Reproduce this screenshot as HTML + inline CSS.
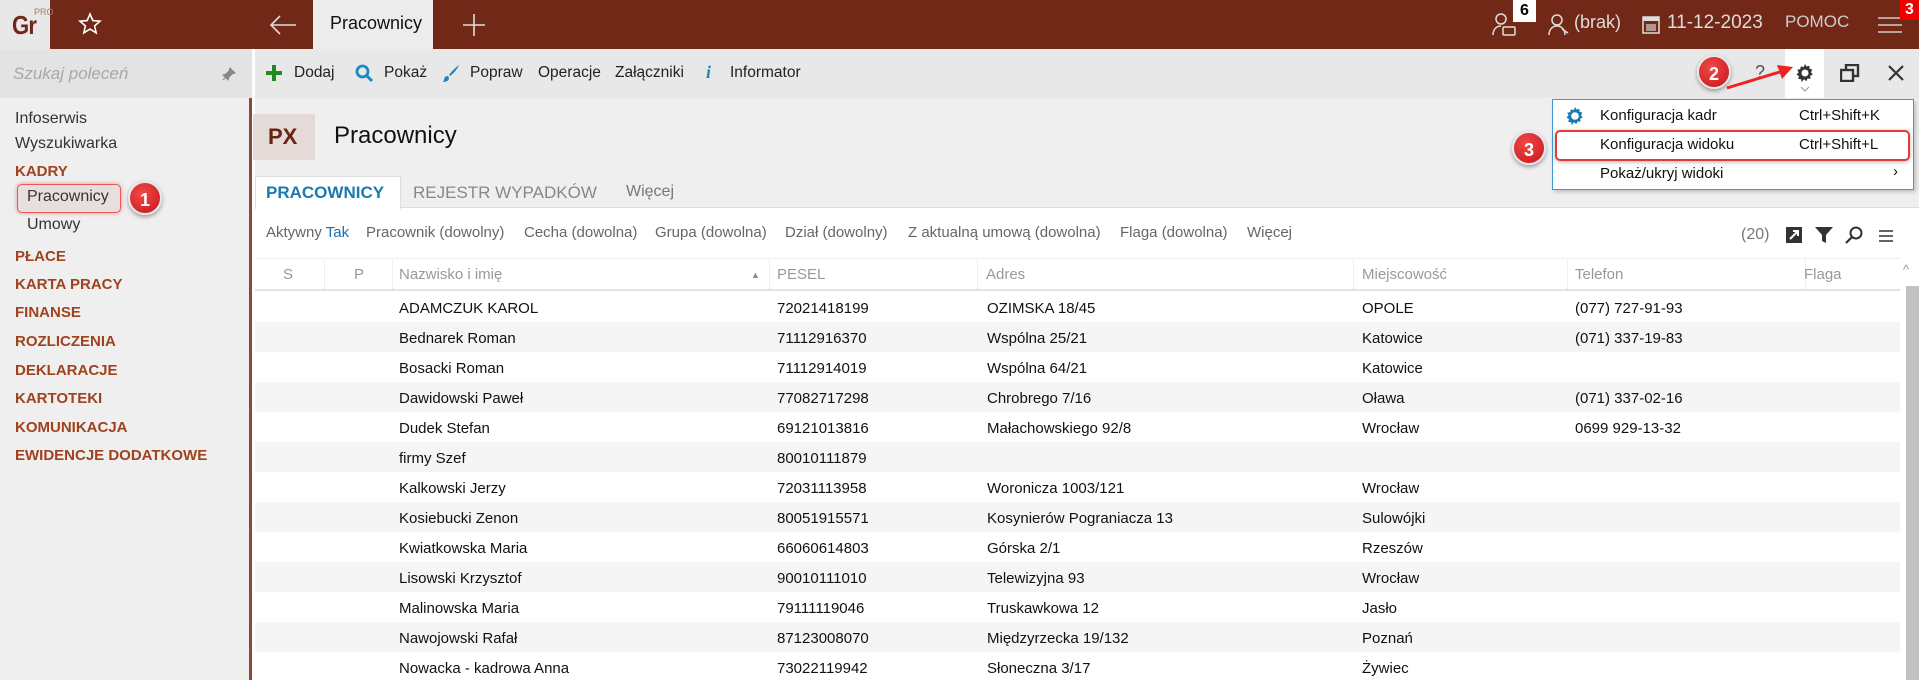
<!DOCTYPE html>
<html><head><meta charset="utf-8"><style>
*{margin:0;padding:0;box-sizing:border-box}
body{width:1919px;height:680px;overflow:hidden;position:relative;background:#fff;font-family:"Liberation Sans","DejaVu Sans",sans-serif;color:#222}
.a{position:absolute;white-space:nowrap}
#top{position:absolute;left:0;top:0;width:1919px;height:49px;background:#722817}
#side{position:absolute;left:0;top:49px;width:252px;height:631px;background:#efefef;border-right:3px solid #8a4a38}
.sm{font-size:16px;color:#333;left:15px}
.sh{font-size:15px;font-weight:bold;color:#a0421e;left:15px}
.tb{font-size:15.5px;color:#222;top:64px}
.cell{font-size:15px;color:#111}
.hd{font-size:15px;color:#999;top:266px}
.flt{font-size:15px;color:#666;top:224px}
.circ{position:absolute;width:34px;height:34px;border-radius:50%;background:radial-gradient(circle at 40% 35%,#f04848,#c8151b);color:#fff;font-weight:bold;font-size:18px;text-align:center;line-height:34px;box-shadow:0 2px 4px rgba(0,0,0,.35);border:2px solid #e8e8e8}
</style></head><body>
<div id="top"></div>
<div class="a" style="left:0;top:0;width:50px;height:49px;background:#e8e8e8"></div>
<div class="a" style="left:12px;top:10px;font-size:26px;font-weight:bold;color:#722817;letter-spacing:-1px;transform:scaleX(.85);transform-origin:left">Gr</div>
<div class="a" style="left:34px;top:7px;font-size:9px;color:#a08070">PRO</div>
<svg class="a" style="left:78px;top:12px" width="24" height="24" viewBox="0 0 24 24"><path d="M12 2l2.9 6.6 7.1.6-5.4 4.7 1.6 7-6.2-3.8-6.2 3.8 1.6-7L2 9.2l7.1-.6z" fill="none" stroke="#fff" stroke-width="1.6"/></svg>
<svg class="a" style="left:268px;top:13px" width="30" height="24" viewBox="0 0 30 24"><path d="M28 12H3M12 3L3 12l9 9" fill="none" stroke="#ddd" stroke-width="1.6"/></svg>
<div class="a" style="left:313px;top:0;width:120px;height:49px;background:#ececec"></div>
<div class="a" style="left:330px;top:13px;font-size:18px;color:#111">Pracownicy</div>
<svg class="a" style="left:462px;top:13px" width="24" height="24"><path d="M12 1v22M1 12h22" stroke="#ddd" stroke-width="1.6"/></svg>
<svg class="a" style="left:1491px;top:11px" width="26" height="28" viewBox="0 0 26 28" fill="none" stroke="#ddd" stroke-width="1.5"><circle cx="10" cy="8" r="5"/><path d="M2 24c0-6 4-9 8-9"/><rect x="12" y="16" width="12" height="8" rx="1"/></svg>
<div class="a" style="left:1513px;top:0;width:23px;height:22px;background:#fff;font-weight:bold;font-size:16px;text-align:center;line-height:22px;color:#000">6</div>
<svg class="a" style="left:1548px;top:13px" width="22" height="24" viewBox="0 0 22 24" fill="none" stroke="#ddd" stroke-width="1.5"><circle cx="9" cy="7" r="5"/><path d="M1 22c0-6 4-9 8-9s8 3 8 9M14 16l6 4"/></svg>
<div class="a" style="left:1574px;top:12px;font-size:18px;color:#ddd">(brak)</div>
<svg class="a" style="left:1642px;top:16px" width="18" height="18"><rect x="1" y="1" width="16" height="16" fill="none" stroke="#ddd" stroke-width="1.5"/><rect x="1" y="1" width="16" height="4" fill="#ddd"/><rect x="4" y="8" width="10" height="7" fill="#ddd" opacity=".6"/></svg>
<div class="a" style="left:1667px;top:12px;font-size:19px;color:#ddd">11-12-2023</div>
<div class="a" style="left:1785px;top:12px;font-size:17px;color:#ccc">POMOC</div>
<svg class="a" style="left:1878px;top:16px" width="24" height="18"><path d="M0 2h24M0 9h24M0 16h24" stroke="#ccc" stroke-width="1.6"/></svg>
<div class="a" style="left:1900px;top:0;width:19px;height:20px;background:#e00;color:#fff;font-weight:bold;font-size:16px;text-align:center;line-height:20px">3</div>

<div id="side"></div>
<div class="a" style="left:0;top:49px;width:252px;height:49px;background:#e3e3e3"></div>
<div class="a" style="left:13px;top:64px;font-size:17px;font-style:italic;color:#a8a8a8">Szukaj poleceń</div>
<svg class="a" style="left:222px;top:67px" width="14" height="14"><path d="M8 1l5 5-3 1-3 3-1 3-5-5 3-1 3-3zM4 10l-3 3" stroke="#888" fill="#888"/></svg>
<div class="a sm" style="top:110px">Infoserwis</div>
<div class="a sm" style="top:135px">Wyszukiwarka</div>
<div class="a sh" style="top:163px">KADRY</div>
<div class="a" style="left:17px;top:184px;width:104px;height:29px;border:1.5px solid #e55;border-radius:5px;background:#e8dede;box-shadow:0 0 4px rgba(220,60,60,.5)"></div>
<div class="a sm" style="left:27px;top:188px">Pracownicy</div>
<div class="a sm" style="left:27px;top:216px">Umowy</div>
<div class="circ" style="left:128px;top:181px">1</div>
<div class="a sh" style="top:248px">PŁACE</div>
<div class="a sh" style="top:276px">KARTA PRACY</div>
<div class="a sh" style="top:304px">FINANSE</div>
<div class="a sh" style="top:333px">ROZLICZENIA</div>
<div class="a sh" style="top:362px">DEKLARACJE</div>
<div class="a sh" style="top:390px">KARTOTEKI</div>
<div class="a sh" style="top:419px">KOMUNIKACJA</div>
<div class="a sh" style="top:447px">EWIDENCJE DODATKOWE</div>

<div class="a" style="left:255px;top:49px;width:1664px;height:49px;background:#e8e8e8"></div>
<div class="a" style="left:255px;top:98px;width:1664px;height:110px;background:#efefef"></div>
<svg class="a" style="left:266px;top:65px" width="16" height="16"><path d="M8 0v16M0 8h16" stroke="#1f8a1f" stroke-width="4"/></svg>
<div class="a tb" style="left:294px">Dodaj</div>
<svg class="a" style="left:355px;top:64px" width="18" height="18"><circle cx="7.5" cy="7.5" r="5.5" fill="none" stroke="#1a8ac0" stroke-width="2.8"/><path d="M11 11l6 6" stroke="#1a8ac0" stroke-width="3"/></svg>
<div class="a tb" style="left:384px">Pokaż</div>
<svg class="a" style="left:442px;top:64px" width="18" height="18"><path d="M17 1C13 4 9 8 7 11l1 1c3-2 7-6 9-11zM6 12c-3 0-4 2-4 4l-1 2c3 0 6-1 6-4z" fill="#1a8ac0"/></svg>
<div class="a tb" style="left:470px">Popraw</div>
<div class="a tb" style="left:538px">Operacje</div>
<div class="a tb" style="left:615px">Załączniki</div>
<div class="a" style="left:706px;top:62px;font-size:18px;font-style:italic;font-weight:bold;color:#1a8ac0;font-family:'Liberation Serif',serif">i</div>
<div class="a tb" style="left:730px">Informator</div>
<div class="a" style="left:1755px;top:62px;font-size:18px;color:#555">?</div>
<div class="a" style="left:1785px;top:49px;width:39px;height:49px;background:#fff"></div>
<svg class="a" style="left:1795px;top:63px" width="20" height="20" viewBox="0 0 20 20"><path d="M10 1l1.5 2.5 2.8-.8.2 2.9 2.8 1-1.3 2.6 1.8 2.3-2.6 1.3.3 2.9-2.9-.2-1.3 2.6-2.3-1.8L6.7 19l-.6-2.8-2.9-.3.8-2.8L1.5 11.5 3.6 9.4 2.3 6.7l2.9-.6.7-2.8 2.7.9z" fill="#333"/><circle cx="10" cy="10" r="3.5" fill="#fff"/></svg>
<svg class="a" style="left:1800px;top:86px" width="10" height="6"><path d="M1 1l4 4 4-4" stroke="#999" fill="none"/></svg>
<svg class="a" style="left:1840px;top:64px" width="20" height="18"><rect x="6" y="1" width="12" height="11" fill="none" stroke="#333" stroke-width="2.4"/><rect x="1" y="6" width="12" height="11" fill="#e8e8e8" stroke="#333" stroke-width="2.4"/></svg>
<svg class="a" style="left:1888px;top:65px" width="16" height="16"><path d="M1 1l14 14M15 1L1 15" stroke="#333" stroke-width="2.2"/></svg>
<div class="circ" style="left:1697px;top:55px">2</div>
<svg class="a" style="left:1725px;top:62px" width="70" height="30"><path d="M2 26L58 9" stroke="#e22" stroke-width="3"/><path d="M68 5L52 3l5 14z" fill="#e22"/></svg>

<div class="a" style="left:253px;top:114px;width:62px;height:46px;background:#e4dad8"></div>
<div class="a" style="left:268px;top:124px;font-size:22px;color:#6a2412;font-weight:bold">PX</div>
<div class="a" style="left:334px;top:122px;font-size:24px;color:#111">Pracownicy</div>

<div class="a" style="left:255px;top:207px;width:1664px;height:1px;background:#ddd"></div>
<div class="a" style="left:255px;top:176px;width:146px;height:33px;background:#fff;border:1px solid #ddd;border-bottom:none"></div>
<div class="a" style="left:266px;top:183px;font-size:17px;font-weight:bold;color:#1a7ab0">PRACOWNICY</div>
<div class="a" style="left:413px;top:183px;font-size:17px;color:#888">REJESTR WYPADKÓW</div>
<div class="a" style="left:626px;top:183px;font-size:16px;color:#777">Więcej</div>

<div class="a flt" style="left:266px">Aktywny <span style="color:#1a6fb0">Tak</span></div>
<div class="a flt" style="left:366px">Pracownik (dowolny)</div>
<div class="a flt" style="left:524px">Cecha (dowolna)</div>
<div class="a flt" style="left:655px">Grupa (dowolna)</div>
<div class="a flt" style="left:785px">Dział (dowolny)</div>
<div class="a flt" style="left:908px">Z aktualną umową (dowolna)</div>
<div class="a flt" style="left:1120px">Flaga (dowolna)</div>
<div class="a flt" style="left:1247px">Więcej</div>
<div class="a" style="left:1741px;top:226px;font-size:16px;color:#777">(20)</div>
<svg class="a" style="left:1785px;top:226px" width="18" height="18"><rect x="1" y="1" width="16" height="16" fill="#333"/><path d="M5 13l8-8M8 5h5v5" stroke="#fff" stroke-width="2" fill="none"/></svg>
<svg class="a" style="left:1815px;top:226px" width="18" height="18"><path d="M0 1h18l-7 8v8l-4-2V9z" fill="#333"/></svg>
<svg class="a" style="left:1845px;top:226px" width="18" height="18"><circle cx="11" cy="7" r="5.5" fill="none" stroke="#333" stroke-width="2"/><path d="M7 11l-6 6" stroke="#333" stroke-width="2.2"/></svg>
<svg class="a" style="left:1879px;top:230px" width="14" height="12"><path d="M0 1h14M0 6h14M0 11h14" stroke="#333" stroke-width="1.5"/></svg>

<div class="a" style="left:255px;top:258px;width:1645px;height:1px;background:#eee"></div>
<div class="a" style="left:255px;top:289px;width:1645px;height:2px;background:#e2e2e2"></div>
<div class="a" style="left:324px;top:260px;height:29px;border-left:1px dotted #ddd"></div>
<div class="a" style="left:392px;top:260px;height:29px;border-left:1px dotted #ddd"></div>
<div class="a" style="left:769px;top:260px;height:29px;border-left:1px dotted #ddd"></div>
<div class="a" style="left:977px;top:260px;height:29px;border-left:1px dotted #ddd"></div>
<div class="a" style="left:1353px;top:260px;height:29px;border-left:1px dotted #ddd"></div>
<div class="a" style="left:1567px;top:260px;height:29px;border-left:1px dotted #ddd"></div>
<div class="a" style="left:1805px;top:260px;height:29px;border-left:1px dotted #ddd"></div>
<div class="a hd" style="left:283px">S</div>
<div class="a hd" style="left:354px">P</div>
<div class="a hd" style="left:399px">Nazwisko i imię</div>
<div class="a" style="left:751px;top:270px;font-size:9px;color:#888">▲</div>
<div class="a hd" style="left:777px">PESEL</div>
<div class="a hd" style="left:986px">Adres</div>
<div class="a hd" style="left:1362px">Miejscowość</div>
<div class="a hd" style="left:1575px">Telefon</div>
<div class="a hd" style="left:1804px">Flaga</div>
<div class="a" style="left:1903px;top:262px;font-size:13px;color:#999">^</div>
<div class="a" style="left:1906px;top:286px;width:13px;height:394px;background:#c2c2c2"></div>

<div class="a" style="left:255px;top:322px;width:1645px;height:30px;background:#f5f5f5"></div>
<div class="a" style="left:255px;top:382px;width:1645px;height:30px;background:#f5f5f5"></div>
<div class="a" style="left:255px;top:442px;width:1645px;height:30px;background:#f5f5f5"></div>
<div class="a" style="left:255px;top:502px;width:1645px;height:30px;background:#f5f5f5"></div>
<div class="a" style="left:255px;top:562px;width:1645px;height:30px;background:#f5f5f5"></div>
<div class="a" style="left:255px;top:622px;width:1645px;height:30px;background:#f5f5f5"></div>

<div class="a cell" style="left:399px;top:294px;line-height:30px">ADAMCZUK KAROL<br>Bednarek Roman<br>Bosacki Roman<br>Dawidowski Paweł<br>Dudek Stefan<br>firmy Szef<br>Kalkowski Jerzy<br>Kosiebucki Zenon<br>Kwiatkowska Maria<br>Lisowski Krzysztof<br>Malinowska Maria<br>Nawojowski Rafał<br>Nowacka - kadrowa Anna</div>
<div class="a cell" style="left:777px;top:294px;line-height:30px">72021418199<br>71112916370<br>71112914019<br>77082717298<br>69121013816<br>80010111879<br>72031113958<br>80051915571<br>66060614803<br>90010111010<br>79111119046<br>87123008070<br>73022119942</div>
<div class="a cell" style="left:987px;top:294px;line-height:30px">OZIMSKA 18/45<br>Wspólna 25/21<br>Wspólna 64/21<br>Chrobrego 7/16<br>Małachowskiego 92/8<br>&nbsp;<br>Woronicza 1003/121<br>Kosynierów Pograniacza 13<br>Górska 2/1<br>Telewizyjna 93<br>Truskawkowa 12<br>Międzyrzecka 19/132<br>Słoneczna 3/17</div>
<div class="a cell" style="left:1362px;top:294px;line-height:30px">OPOLE<br>Katowice<br>Katowice<br>Oława<br>Wrocław<br>&nbsp;<br>Wrocław<br>Sulowójki<br>Rzeszów<br>Wrocław<br>Jasło<br>Poznań<br>Żywiec</div>
<div class="a cell" style="left:1575px;top:294px;line-height:30px">(077) 727-91-93<br>(071) 337-19-83<br>&nbsp;<br>(071) 337-02-16<br>0699 929-13-32</div>

<div class="a" style="left:1552px;top:99px;width:362px;height:91px;background:#fff;border:1px solid #3c9ad8;box-shadow:2px 2px 4px rgba(0,0,0,.2)"></div>
<svg class="a" style="left:1565px;top:106px" width="20" height="20" viewBox="0 0 20 20"><path d="M10 1l1.5 2.5 2.8-.8.2 2.9 2.8 1-1.3 2.6 1.8 2.3-2.6 1.3.3 2.9-2.9-.2-1.3 2.6-2.3-1.8L6.7 19l-.6-2.8-2.9-.3.8-2.8L1.5 11.5 3.6 9.4 2.3 6.7l2.9-.6.7-2.8 2.7.9z" fill="#1a7ab0"/><circle cx="10" cy="10" r="3.8" fill="#fff"/></svg>
<div class="a" style="left:1600px;top:107px;font-size:15px;color:#111">Konfiguracja kadr</div>
<div class="a" style="left:1799px;top:107px;font-size:15px;color:#111">Ctrl+Shift+K</div>
<div class="a" style="left:1555px;top:130px;width:355px;height:31px;border:2px solid #e23a3a;border-radius:5px;box-shadow:0 1px 4px rgba(0,0,0,.3)"></div>
<div class="a" style="left:1600px;top:136px;font-size:15px;color:#111">Konfiguracja widoku</div>
<div class="a" style="left:1799px;top:136px;font-size:15px;color:#111">Ctrl+Shift+L</div>
<div class="a" style="left:1600px;top:165px;font-size:15px;color:#111">Pokaż/ukryj widoki</div>
<div class="a" style="left:1893px;top:163px;font-size:15px;color:#111">›</div>
<div class="circ" style="left:1512px;top:131px">3</div>
</body></html>
